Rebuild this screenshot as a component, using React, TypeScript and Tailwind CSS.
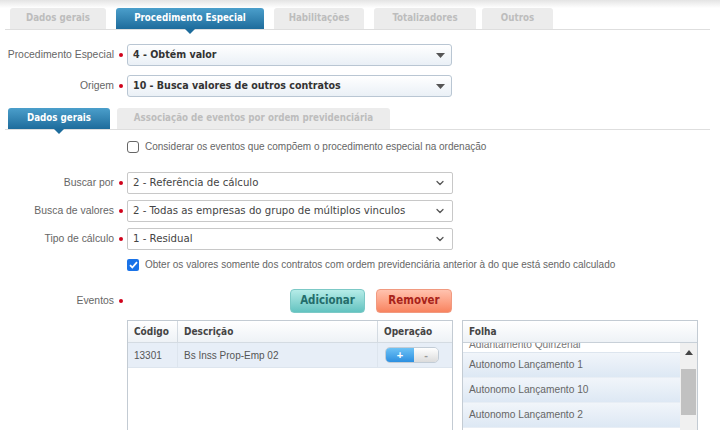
import { ChevronDown } from 'lucide-react';

const ui = { fontFamily: '"Liberation Sans", Arial, sans-serif' };
const tahoma = { fontFamily: '"DejaVu Sans Condensed", "DejaVu Sans", sans-serif' };

function Dot() {
  return (
    <span className="w-[13px] flex justify-center">
      <span className="w-[4px] h-[4px] rounded-full bg-[#d0021b]" />
    </span>
  );
}

function Label({ text }: { text: string }) {
  return <span className="w-[114px] text-right text-[10.4px] text-[#666]">{text}</span>;
}

function BoldSelect({ value }: { value: string }) {
  return (
    <div
      className="w-[325px] h-[22px] flex items-center justify-between px-[5px] border border-[#b9c6d3] rounded-[3px] bg-gradient-to-b from-white to-[#eaf0f6] text-[10.6px] font-bold text-[#333]"
      style={tahoma}
    >
      <span>{value}</span>
      <svg width="9" height="5" viewBox="0 0 9 5" className="mr-[1px]">
        <path d="M0 0h9L4.5 5z" fill="#555" />
      </svg>
    </div>
  );
}

function PlainSelect({ value }: { value: string }) {
  return (
    <div
      className="w-[326px] h-[22px] flex items-center justify-between pl-[5px] pr-[6px] border border-[#c8c8c8] rounded-[2px] bg-white text-[11.3px] text-[#444]"
      style={tahoma}
    >
      <span>{value}</span>
      <ChevronDown className="w-[12px] h-[12px] text-[#555]" strokeWidth={2.5} />
    </div>
  );
}

function Tab({ text, active, w }: { text: string; active?: boolean; w: string }) {
  return (
    <div
      className={`relative h-[21px] flex items-center justify-center rounded-t-[3px] text-[9.7px] font-bold ${w} ${
        active
          ? 'bg-gradient-to-b from-[#4b9fcb] to-[#1d6c9c] text-white'
          : 'bg-[#ececec] text-[#bdbdbd]'
      }`}
      style={tahoma}
    >
      {text}
      {active && (
        <span className="absolute left-1/2 -translate-x-1/2 top-[21px] w-0 h-0 border-l-[5px] border-r-[5px] border-t-[5px] border-l-transparent border-r-transparent border-t-[#1d6c9c]" />
      )}
    </div>
  );
}

const folhas = ['Autonomo Lançamento 1', 'Autonomo Lançamento 10', 'Autonomo Lançamento 2'];

export default function App() {
  return (
    <div className="w-[720px] h-[430px] overflow-hidden bg-white" style={ui}>
      <div className="h-[8px] bg-gradient-to-b from-[#e4e4e4] to-white" />

      {/* Main tabs */}
      <div className="mx-[5px] pl-[5px] flex border-b border-[#dedede] w-[705px]">
        <Tab text="Dados gerais" w="w-[96px]" />
        <div className="w-[10px]" />
        <Tab text="Procedimento Especial" active w="w-[148px]" />
        <div className="w-[10px]" />
        <Tab text="Habilitações" w="w-[90px]" />
        <div className="w-[10px]" />
        <Tab text="Totalizadores" w="w-[102px]" />
        <div className="w-[6px]" />
        <Tab text="Outros" w="w-[71px]" />
      </div>

      <div className="flex items-center mt-[14px]">
        <Label text="Procedimento Especial" />
        <Dot />
        <BoldSelect value="4 - Obtém valor" />
      </div>
      <div className="flex items-center mt-[9px]">
        <Label text="Origem" />
        <Dot />
        <BoldSelect value="10 - Busca valores de outros contratos" />
      </div>

      {/* Sub tabs */}
      <div className="mt-[11px] mx-[5px] pl-[3px] flex border-b border-[#dedede] w-[705px]">
        <Tab text="Dados gerais" active w="w-[102px]" />
        <div className="w-[7px]" />
        <Tab text="Associação de eventos por ordem previdenciária" w="w-[273px]" />
      </div>

      <div className="flex items-center mt-[9px] pl-[127px] gap-[6px] text-[10px] text-[#666]">
        <span className="w-[12px] h-[12px] border border-[#666] rounded-[3px] bg-white" />
        <span>Considerar os eventos que compõem o procedimento especial na ordenação</span>
      </div>

      <div className="flex items-center mt-[18px]">
        <Label text="Buscar por" />
        <Dot />
        <PlainSelect value="2 - Referência de cálculo" />
      </div>
      <div className="flex items-center mt-[6px]">
        <Label text="Busca de valores" />
        <Dot />
        <PlainSelect value="2 - Todas as empresas do grupo de múltiplos vinculos" />
      </div>
      <div className="flex items-center mt-[6px]">
        <Label text="Tipo de cálculo" />
        <Dot />
        <PlainSelect value="1 - Residual" />
      </div>

      <div className="flex items-center mt-[7px] pl-[127px] gap-[6px] text-[10px] text-[#666]">
        <span className="w-[12px] h-[12px] rounded-[2px] bg-[#1a73e8] flex items-center justify-center">
          <svg width="9" height="8" viewBox="0 0 9 8">
            <path d="M1 4.2l2.3 2.3L8 1.2" stroke="white" strokeWidth="1.8" fill="none" />
          </svg>
        </span>
        <span>Obter os valores somente dos contratos com ordem previdenciária anterior à do que está sendo calculado</span>
      </div>

      {/* Eventos */}
      <div className="flex items-center mt-[17px]">
        <Label text="Eventos" />
        <Dot />
        <div className="w-[163px]" />
        <button
          className="w-[75px] h-[24px] rounded-[4px] border border-[#7cc9c6] bg-gradient-to-b from-[#b5ece8] to-[#62c3c0] text-[11.4px] font-bold text-[#236d6b]"
          style={tahoma}
        >
          Adicionar
        </button>
        <div className="w-[11px]" />
        <button
          className="w-[76px] h-[24px] rounded-[4px] border border-[#f19a80] bg-gradient-to-b from-[#ffc2ae] to-[#f8835f] text-[11.4px] font-bold text-[#a8231a]"
          style={tahoma}
        >
          Remover
        </button>
      </div>

      <div className="flex mt-[7px] pl-[127px] gap-[9px] items-start">
        {/* Eventos table */}
        <div className="w-[326px] h-[120px] border border-[#c3cbd3] border-b-0">
          <div
            className="h-[22px] flex bg-gradient-to-b from-white to-[#eef2f6] border-b border-[#d4dbe2] text-[10px] font-bold text-[#444]"
            style={tahoma}
          >
            <div className="w-[50px] px-[6px] flex items-center border-r border-[#d4dbe2]">Código</div>
            <div className="w-[200px] px-[6px] flex items-center border-r border-[#d4dbe2]">Descrição</div>
            <div className="flex-1 px-[6px] flex items-center">Operação</div>
          </div>
          <div className="h-[25px] flex bg-[#e7eef7] border-b border-[#dde5ee] text-[10px] text-[#555]">
            <div className="w-[50px] px-[6px] flex items-center border-r border-[#dde5ee]">13301</div>
            <div className="w-[200px] px-[6px] flex items-center border-r border-[#dde5ee]">Bs Inss Prop-Emp 02</div>
            <div className="flex-1 pl-[7px] flex items-center">
              <div className="flex h-[16px] w-[54px] rounded-[5px] overflow-hidden border border-[#c2ccd6]">
                <span className="w-[28px] flex items-center justify-center bg-gradient-to-b from-[#6cc2f5] to-[#2b8fe0] text-white text-[11px] font-bold">+</span>
                <span className="flex-1 flex items-center justify-center bg-gradient-to-b from-white to-[#dcdcdc] text-[#999] text-[11px] font-bold">-</span>
              </div>
            </div>
          </div>
        </div>

        {/* Folha list */}
        <div className="w-[236px] h-[120px] border border-[#c3cbd3] border-b-0 flex flex-col">
          <div
            className="h-[22px] shrink-0 flex items-center px-[6px] bg-gradient-to-b from-white to-[#eef2f6] border-b border-[#c8d0d8] text-[10px] font-bold text-[#444]"
            style={tahoma}
          >
            Folha
          </div>
          <div className="flex flex-1 overflow-hidden">
            <div className="flex-1 overflow-hidden">
              <div className="h-[10px] overflow-hidden bg-white border-b border-[#dde5ee]">
                <div className="-mt-[7px] px-[6px] h-[17px] flex items-center text-[10.2px] text-[#777]">Adiantamento Quinzenal</div>
              </div>
              {folhas.map((f) => (
                <div
                  key={f}
                  className="h-[25px] flex items-center px-[6px] bg-gradient-to-b from-[#f1f5fa] to-[#dde8f4] border-b border-[#e8eef5] text-[10.2px] text-[#666]"
                >
                  {f}
                </div>
              ))}
            </div>
            <div className="w-[17px] bg-[#f0f0f0] flex flex-col items-center">
              <svg width="8" height="5" viewBox="0 0 8 5" className="mt-[7px]">
                <path d="M0 5h8L4 0z" fill="#444" />
              </svg>
              <div className="mt-[14px] w-[15px] h-[46px] bg-[#c1c1c1]" />
            </div>
          </div>
        </div>
      </div>
    </div>
  );
}
